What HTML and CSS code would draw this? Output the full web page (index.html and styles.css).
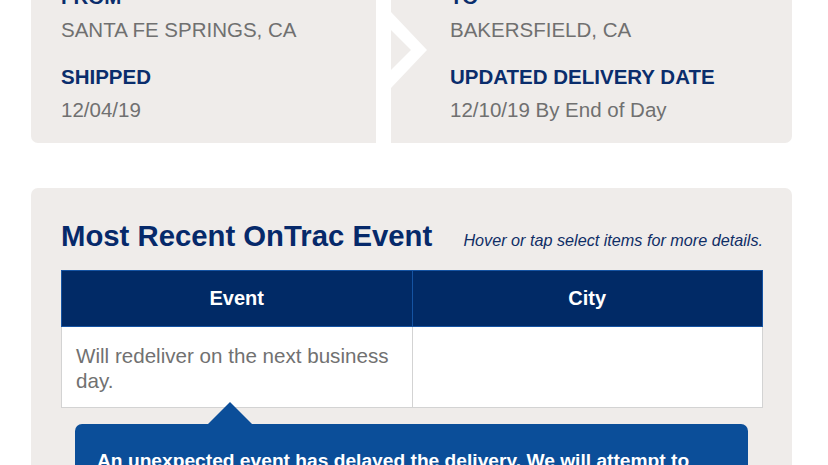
FILE: index.html
```html
<!DOCTYPE html>
<html lang="en">
<head>
<meta charset="utf-8">
<title>OnTrac Tracking</title>
<link rel="stylesheet" href="styles.css">
</head>
<body>
<main class="page">
  <section class="route">
    <div class="route-col">
      <div class="field">
        <div class="label">FROM</div>
        <div class="value">SANTA FE SPRINGS, CA</div>
      </div>
      <div class="field">
        <div class="label">SHIPPED</div>
        <div class="value">12/04/19</div>
      </div>
    </div>
    <div class="divider">
      <svg class="chevron" width="52" height="200" viewBox="0 0 52 200" aria-hidden="true">
        <polygon fill="#ffffff" points="0,0 15,0 15,50 51,88 15,126 15,200 0,200 0,123 35,88 0,53"/>
      </svg>
    </div>
    <div class="route-col route-col-right">
      <div class="field">
        <div class="label">TO</div>
        <div class="value">BAKERSFIELD, CA</div>
      </div>
      <div class="field">
        <div class="label">UPDATED DELIVERY DATE</div>
        <div class="value">12/10/19 By End of Day</div>
      </div>
    </div>
  </section>

  <section class="events">
    <div class="events-head">
      <h2 class="events-title">Most Recent OnTrac Event</h2>
      <p class="events-hint">Hover or tap select items for more details.</p>
    </div>
    <table class="events-table">
      <thead>
        <tr><th>Event</th><th>City</th></tr>
      </thead>
      <tbody>
        <tr><td>Will redeliver on the next business day.</td><td></td></tr>
      </tbody>
    </table>
    <div class="tip">
      <p class="tip-text">An unexpected event has delayed the delivery. We will attempt to redeliver on the next business day.</p>
    </div>
  </section>
</main>
</body>
</html>
```

FILE: styles.css
```css
* { box-sizing: border-box; }

html, body {
  margin: 0;
  padding: 0;
  background: #ffffff;
  overflow: hidden;
}

body {
  font-family: "Liberation Sans", Arial, Helvetica, sans-serif;
  height: 465px;
}

.page {
  width: 761px;
  margin-left: 31px;
  margin-top: -38px;
  display: flex;
  flex-direction: column;
  gap: 45px;
}

/* ---------- route card ---------- */
.route {
  display: flex;
  background: #efecea;
  border-radius: 0 0 7px 7px;
  overflow: hidden;
}

.route-col {
  width: 345px;
  padding: 20px 0 18px 30px;
  display: flex;
  flex-direction: column;
  gap: 17px;
}

.route-col-right {
  flex: 1;
  width: auto;
  padding-left: 59px;
}

.divider {
  width: 15px;
  flex: none;
  background: #ffffff;
  position: relative;
}

.chevron {
  position: absolute;
  left: 0;
  top: 0;
  overflow: visible;
}

.label {
  font-size: 20.5px;
  line-height: 30px;
  font-weight: 700;
  color: #0a2d6c;
}

.value {
  margin-top: 3px;
  font-size: 20.5px;
  line-height: 30px;
  color: #707070;
}

/* ---------- events card ---------- */
.events {
  background: #efecea;
  border-radius: 7px 7px 0 0;
  padding: 31px 29px 40px 30px;
}

.events-head {
  display: flex;
  align-items: baseline;
  justify-content: space-between;
}

.events-title {
  margin: 0;
  font-size: 29.3px;
  line-height: 34px;
  font-weight: 700;
  color: #06296a;
}

.events-hint {
  margin: 0;
  font-size: 16.2px;
  font-style: italic;
  color: #0f2e66;
}

.events-table {
  margin-top: 17px;
  width: 100%;
  border-collapse: collapse;
  table-layout: fixed;
}

.events-table th {
  height: 56px;
  background: #012a66;
  border: 1px solid #1553a2;
  color: #ffffff;
  font-size: 20px;
  font-weight: 700;
  text-align: center;
  padding: 0;
}

.events-table td {
  background: #ffffff;
  border: 1px solid #d3d3d3;
  border-top: none;
  padding: 16px 14px 14px 14px;
  font-size: 20.6px;
  line-height: 25px;
  color: #717171;
  vertical-align: top;
}

.tip {
  position: relative;
  margin: 16px 15px 0 14px;
  background: #0b4e99;
  border-radius: 7px;
  padding: 24px 22px 20px 22px;
}

.tip::before {
  content: "";
  position: absolute;
  left: 133px;
  top: -22px;
  border-left: 22px solid transparent;
  border-right: 22px solid transparent;
  border-bottom: 22px solid #0b4e99;
}

.tip-text {
  margin: 0;
  font-size: 19.2px;
  line-height: 26px;
  font-weight: 700;
  color: #ffffff;
}
```
